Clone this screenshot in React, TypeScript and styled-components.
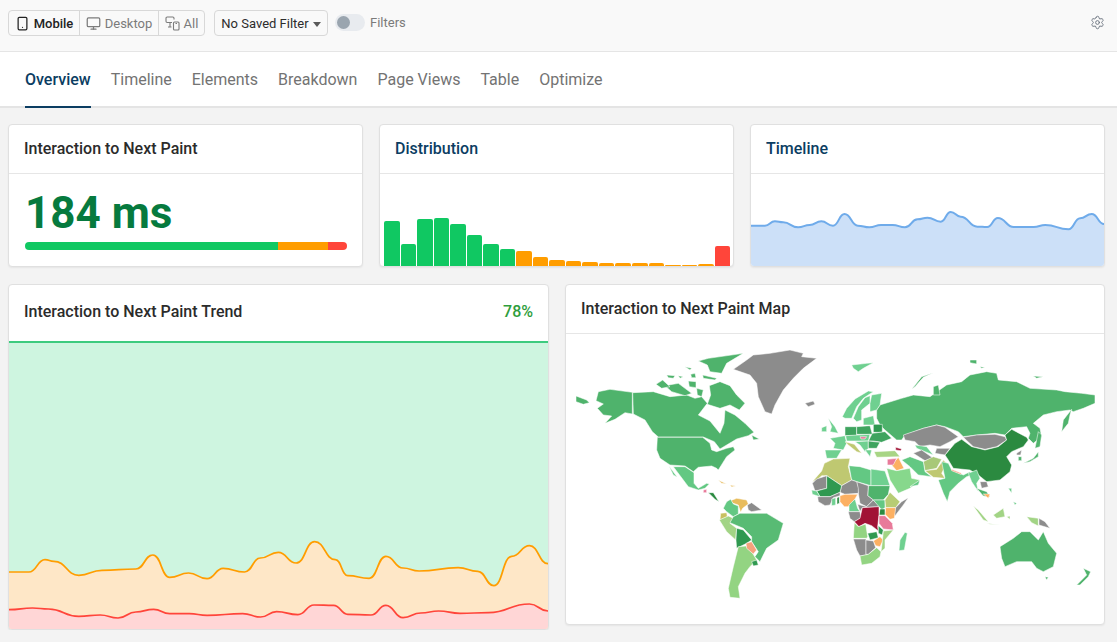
import React from 'react';
import styled, { createGlobalStyle } from 'styled-components';
import { Monitor, Settings, Smartphone } from 'lucide-react';

type Point = [number, number];
type Shape = [string, string];

const GlobalStyle = createGlobalStyle`
  html, body { margin: 0; padding: 0; background: #f3f3f3; overflow: hidden; }
  body { font-family: Roboto, "Liberation Sans", sans-serif; }
`;

const TopBar = styled.div`
  height: 41px;
  display: flex;
  align-items: flex-start;
  padding: 10px 12px 0 8px;
  background: #f9f9f9;
  border-bottom: 1px solid #e5e5e5;
`;

const Segments = styled.div`
  display: flex;
  height: 26px;
  box-sizing: border-box;
  border: 1px solid #d8d8d8;
  border-radius: 4px;
`;

const Segment = styled.div<{ $active?: boolean; $width: number }>`
  width: ${p => p.$width}px;
  box-sizing: border-box;
  display: flex;
  align-items: center;
  justify-content: center;
  gap: 4px;
  font-size: 13px;
  font-weight: ${p => (p.$active ? 500 : 400)};
  color: ${p => (p.$active ? '#222' : '#7b7b7b')};
  border-left: ${p => (p.$active ? 'none' : '1px solid #d8d8d8')};
`;

const SelectBox = styled.div`
  margin-left: 9px;
  width: 114px;
  height: 26px;
  box-sizing: border-box;
  display: flex;
  align-items: center;
  justify-content: center;
  gap: 4px;
  font-size: 13px;
  color: #2c2c2c;
  border: 1px solid #d8d8d8;
  border-radius: 4px;
`;

const Caret = styled.span`
  width: 0;
  height: 0;
  margin-top: 2px;
  border-left: 4px solid transparent;
  border-right: 4px solid transparent;
  border-top: 5px solid #5a5a5a;
`;

const Toggle = styled.div`
  margin: 4px 0 0 7px;
  width: 30px;
  height: 17px;
  padding-left: 2px;
  box-sizing: border-box;
  display: flex;
  align-items: center;
  background: #e8ebef;
  border-radius: 9px;
`;

const Knob = styled.span`
  width: 13px;
  height: 13px;
  border-radius: 50%;
  background: #9aa5af;
`;

const ToggleLabel = styled.span`
  margin-left: 5px;
  line-height: 25px;
  font-size: 13px;
  color: #7b7b7b;
`;

const GearSlot = styled.div`
  margin: 5px 0 0 auto;
  display: flex;
  color: #6c7480;
`;

const TabBar = styled.nav`
  height: 54px;
  display: flex;
  gap: 20px;
  padding-left: 25px;
  background: #fff;
  border-bottom: 2px solid #e4e4e4;
`;

const Tab = styled.div<{ $active?: boolean }>`
  height: 56px;
  box-sizing: border-box;
  display: flex;
  align-items: center;
  font-size: 16px;
  font-weight: ${p => (p.$active ? 500 : 400)};
  color: ${p => (p.$active ? '#0b3d62' : '#737373')};
  border-bottom: 2px solid ${p => (p.$active ? '#0b3d62' : 'transparent')};
`;

const Main = styled.main`
  display: flex;
  flex-direction: column;
  gap: 17px;
  padding: 16px 12px 0 8px;
`;

const TopRow = styled.div`
  display: grid;
  grid-template-columns: repeat(3, 355px);
  column-gap: 16px;
`;

const BottomRow = styled.div`
  display: grid;
  grid-template-columns: 541px 540px;
  column-gap: 16px;
  align-items: start;
`;

const Card = styled.section`
  box-sizing: border-box;
  background: #fff;
  border: 1px solid #e0e0e0;
  border-radius: 4px;
  box-shadow: 0 1px 2px rgba(0, 0, 0, 0.06);
  overflow: hidden;
`;

const CardHeader = styled.header<{ $tall?: boolean; $ruled?: boolean }>`
  height: ${p => (p.$tall ? 56 : 49)}px;
  box-sizing: border-box;
  display: flex;
  align-items: center;
  justify-content: space-between;
  padding: 0 15px ${p => (p.$tall ? 3 : 1)}px;
  border-bottom: ${p => (p.$ruled ? '1px solid #e6e6e6' : 'none')};
`;

const CardTitle = styled.h2<{ $link?: boolean }>`
  margin: 0;
  font-size: 16px;
  font-weight: 500;
  color: ${p => (p.$link ? '#0b3d62' : '#2b2b2b')};
`;

const Percent = styled.span`
  font-size: 16px;
  font-weight: 500;
  color: #2f9e3d;
`;

const MetricBody = styled.div`
  height: 92px;
  box-sizing: border-box;
  padding: 13px 15px 0 16px;
`;

const MetricValue = styled.div`
  font-size: 44px;
  line-height: 52px;
  font-weight: 700;
  color: #067a3e;
`;

const ScoreBar = styled.div`
  display: flex;
  height: 8px;
  margin-top: 3px;
  border-radius: 4px;
  overflow: hidden;
`;

const ScorePart = styled.span<{ $color: string }>`
  background: ${p => p.$color};
`;

const Bars = styled.div`
  height: 92px;
  box-sizing: border-box;
  display: flex;
  align-items: flex-end;
  gap: 1px;
  padding: 0 3px 0 4px;
`;

const Bar = styled.div<{ $color: string }>`
  flex: 1;
  background: ${p => p.$color};
  border-radius: 2px 2px 0 0;
`;

const ChartSvg = styled.svg`
  display: block;
  width: 100%;
`;

const GREEN = '#10c862';
const ORANGE = '#ff9d00';
const RED = '#ff453a';

const tabs = ['Overview', 'Timeline', 'Elements', 'Breakdown', 'Page Views', 'Table', 'Optimize'];

const barHeights: [number, string][] = [
  [45, GREEN], [22, GREEN], [47, GREEN], [48, GREEN], [42, GREEN], [31, GREEN], [22, GREEN], [17, GREEN],
  [15, ORANGE], [9, ORANGE], [6, ORANGE], [5, ORANGE], [4, ORANGE], [3, ORANGE], [3, ORANGE], [3, ORANGE],
  [3, ORANGE], [1, ORANGE], [1, ORANGE], [2, ORANGE], [20, RED],
];

const sparkLine: Point[] = [
  [18, 677], [60, 677], [90, 664], [115, 667], [160, 682], [195, 675], [230, 664], [265, 677], [300, 642],
  [340, 677], [375, 682], [410, 675], [445, 675], [482, 682], [520, 658], [550, 653], [590, 665], [620, 636],
  [650, 650], [700, 680], [730, 681], [762, 654], [810, 681], [870, 681], [905, 675], [975, 688], [1010, 655],
  [1045, 642], [1082, 672],
];

const orangeLine: Point[] = [
  [24, 157], [80, 157], [125, 120], [150, 125], [220, 167], [285, 152], [380, 148], [428, 106], [475, 173],
  [528, 160], [580, 177], [625, 146], [685, 157], [730, 115], [780, 98], [830, 130], [882, 66], [940, 120],
  [975, 168], [1035, 176], [1082, 110], [1130, 145], [1175, 154], [1285, 144], [1340, 155], [1385, 198],
  [1435, 110], [1485, 78], [1537, 132],
];

const redLine: Point[] = [
  [24, 270], [90, 265], [135, 268], [220, 290], [280, 286], [330, 295], [380, 277], [430, 269], [475, 282],
  [530, 282], [580, 287], [680, 282], [730, 292], [775, 276], [835, 285], [880, 256], [935, 257], [975, 284],
  [1040, 286], [1082, 257], [1130, 294], [1180, 280], [1230, 274], [1290, 281], [1370, 279], [1485, 253],
  [1537, 274],
];

// curve through the points, flat at each knot like the chart lib's monotone mode
const smooth = (pts: Point[]) =>
  pts.reduce((d, [x, y], i) => {
    if (i === 0) return `M${x} ${y}`;
    const [px, py] = pts[i - 1];
    const mx = (px + x) / 2;
    return `${d} C${mx} ${py} ${mx} ${y} ${x} ${y}`;
  }, '');

const area = (pts: Point[], bottom: number) =>
  `${smooth(pts)} L${pts[pts.length - 1][0]} ${bottom} L${pts[0][0]} ${bottom}Z`;

const C = {
  mid: '#4fb36c',
  brazil: '#58bb74',
  light: '#63c883',
  pale: '#6fd090',
  lime: '#93d482',
  peru: '#a2d485',
  dark: '#2b8a40',
  deep: '#2f9950',
  europe: '#3fa45f',
  gray: '#8c8c8c',
  olive: '#bfc871',
  khaki: '#c8c060',
  amber: '#e8bc5c',
  orange: '#fcb062',
  salmon: '#f5a27c',
  pink: '#e87a9a',
  crimson: '#a11235',
};

// outlines are traced per crop of the reference, so each group has its own origin
const canadaLand: Shape[] = [
  [C.mid, 'M38 143L100 140L150 155L200 150L225 160L245 155L262 175L235 210L270 228L300 265L312 235L315 195L345 210L375 235L402 262L385 272L350 282L300 312L283 290L250 276H115L97 260L75 225L40 207Z'],
  [C.mid, 'M262 178L272 150L268 122L300 110L330 122L350 150L375 175L358 195L330 180L300 190Z'],
  [C.mid, 'M135 122L175 115L215 145L195 152L155 140Z'],
  [C.mid, 'M108 118L128 105L150 125L125 130Z'],
  [C.mid, 'M235 48L265 40L370 25L320 55L305 85L270 80L262 60Z'],
  [C.mid, 'M205 108L228 110V128L208 125Z'],
  [C.mid, 'M140 90L165 92L160 100L145 98Z'],
  [C.mid, 'M175 92L190 95L180 100Z'],
  [C.mid, 'M195 65L215 70L210 75Z'],
  [C.mid, 'M212 88L225 85L228 98H215Z'],
  [C.mid, 'M248 90L290 100L285 105L250 100Z'],
  [C.mid, 'M230 130L250 135L245 155L232 150Z'],
  [C.mid, 'M395 270L418 282L400 285Z'],
];

const americasLand: Shape[] = [
  [C.mid, 'M85 155L120 148L187 157V222L165 218L135 238L105 250L125 228L100 225L82 205L100 192L78 182Z'],
  [C.mid, 'M18 168L50 180L58 188L40 193L18 185Z'],
  [C.gray, 'M490 88L530 60L550 45L600 40L660 30L700 40L695 50L740 55L700 85L670 115L640 150L615 195L605 222L585 215L565 170L560 130L540 105Z'],
  [C.mid, 'M262 292H398L420 310L425 330L440 335L470 325L490 320L495 330L470 350L445 390L440 385L425 378L385 382L370 395L345 378L300 375L270 355L260 330Z'],
  [C.light, 'M310 380L345 380L372 398L372 430L385 445L410 430L418 432L405 445L385 450L355 440L340 420Z'],
  [C.light, 'M297 378L322 412L310 405Z'],
  [C.pink, 'M400 450L410 448V458H400Z'],
  [C.dark, 'M415 458H430L447 485L435 478Z'],
  [C.amber, 'M445 420L470 432L455 430Z'],
  [C.amber, 'M480 435L497 438L485 441Z'],
  [C.amber, 'M482 482L500 475L530 480L535 492L518 505L512 517L505 495L490 490Z'],
  [C.light, 'M470 485L482 478L490 492L505 498V522L490 530L470 515L460 505Z'],
  [C.gray, 'M532 495L545 488L575 510L545 515L535 510Z'],
  [C.khaki, 'M452 520L470 518L472 530L450 540Z'],
  [C.peru, 'M448 540L475 528L490 535L480 550L500 565L497 600L470 575Z'],
  [C.brazil, 'M490 530L510 520H590L640 550L625 600L590 625L570 665L555 650L565 635L545 605V590L520 565L480 548Z'],
  [C.deep, 'M500 565L520 570L545 600L530 610L500 625L498 600Z'],
  [C.lime, 'M505 620L528 618L548 640L560 660L540 680L525 700L505 740L510 775L480 772L475 745L490 680Z'],
  [C.salmon, 'M528 610L545 605L560 630L550 642L530 625Z'],
  [C.deep, 'M545 665L560 660L565 675L550 678Z'],
];

const asiaLand: Shape[] = [
  [C.mid, 'M140 210L150 195L215 175L250 165L300 170L350 135L395 125L420 105L470 95L500 100L505 120L560 125L600 145L680 150L705 155L755 160L795 165V190L760 205L730 215L720 210L680 215L640 225L610 250L630 265L635 290L610 310L595 295L600 280L590 260L545 265L525 285L495 280L440 285L400 290L385 275L345 260L320 255L280 265L225 285L215 300H200L165 270L150 255L140 235Z'],
  [C.mid, 'M725 208L700 240L695 275L715 250L720 225Z'],
  [C.mid, 'M245 148L275 110L310 98L280 112L255 140Z'],
  [C.mid, 'M310 140L325 135L330 165H310Z'],
  [C.pale, 'M65 75L110 70L130 68L100 85L85 95L70 85Z'],
  [C.mid, 'M420 60H440V72L420 68Z'],
  [C.mid, 'M450 80L465 82L455 85Z'],
  [C.mid, 'M610 108L640 110L620 115Z'],
  [C.gray, 'M220 285L280 265L320 255L345 262L385 290L360 305L330 320L300 315L270 320L255 305L225 300Z'],
  [C.gray, 'M400 292L440 285L495 283L525 290L530 300L500 320L465 328L430 320Z'],
  [C.dark, 'M345 345L375 310L395 298L425 320L465 330L505 320L530 300L525 285L545 268L590 292L595 300L580 320L545 335L530 350L545 375L540 395L510 420L470 425L445 405L420 390L370 385L355 360Z'],
  [C.pale, 'M255 315L290 320L310 345L285 335L260 325Z'],
  [C.gray, 'M250 340L275 330L310 355L285 362Z'],
  [C.gray, 'M320 325H360L345 345L315 340Z'],
  ['#a8c878', 'M280 365L310 350L335 358L320 385L285 392Z'],
  [C.olive, 'M285 392L320 388L340 360L350 370L335 400L345 415L310 412Z'],
  [C.light, 'M215 360L240 350L280 365L285 395L305 410L265 405L240 380Z'],
  [C.orange, 'M185 375L205 352L222 385L200 392Z'],
  [C.pink, 'M172 358L200 355L190 375H172Z'],
  ['#a8d585', 'M132 335L195 332L210 350L140 352Z'],
  [C.crimson, 'M197 322L215 327L212 332L197 330Z'],
  ['#87d88c', 'M170 385L200 392L240 385L245 415L270 420L240 445L205 460L180 420Z'],
  [C.light, 'M240 440L270 420L265 435Z'],
  [C.light, 'M335 365L355 370L365 390L400 405L420 395L425 405L410 410L385 430L360 455L352 485L340 460L325 420L345 415Z'],
  [C.salmon, 'M365 388L395 400L392 403L365 392Z'],
  [C.pale, 'M415 400L440 390L450 415L440 430L445 455L425 425Z'],
  [C.gray, 'M450 425H470L475 440L455 445Z'],
  [C.mid, 'M440 445L470 455L480 470L460 468Z'],
  [C.orange, 'M460 462H480L475 475Z'],
  [C.peru, 'M430 498L445 510L475 545L460 540Z'],
  [C.peru, 'M490 525L520 505L525 530L500 535Z'],
  [C.peru, 'M530 530L540 528V538Z'],
  [C.peru, 'M470 550L510 555L480 553Z'],
  [C.light, 'M535 445H545V460Z'],
  [C.light, 'M550 485L560 490L555 495Z'],
  [C.peru, 'M590 530L625 535V558L605 548Z'],
  [C.gray, 'M627 535L645 545L660 565L627 555Z'],
  [C.mid, 'M625 275L635 285L630 320L615 325Z'],
  [C.mid, 'M580 370L610 355L625 335V350L600 365Z'],
  [C.gray, 'M560 340L575 330L572 345H560Z'],
  [C.mid, 'M565 350H575V362H565Z'],
  [C.mid, 'M510 620L550 595L575 575H600L625 600L640 575L655 610L680 640L670 680L640 695L620 685L605 665H560L525 680L515 655Z'],
  [C.mid, 'M740 735L770 705L760 685L782 695L775 710L750 735Z'],
  [C.mid, 'M645 710L655 712L650 720Z'],
];

const europeLand: Shape[] = [
  [C.gray, 'M0 55L25 48L30 58L10 65Z'],
  [C.pale, 'M112 95L125 70L150 42L190 18L205 20L175 40L155 65L140 100L120 100Z'],
  [C.pale, 'M145 100L160 65L180 38L195 32V55L170 75V105L155 110Z'],
  [C.pale, 'M200 30L230 25L225 60L215 75L195 80V55Z'],
  [C.pale, 'M70 100L90 125L100 145L75 140L80 125Z'],
  [C.pale, 'M50 128L65 122V140H50Z'],
  [C.pale, 'M75 160L120 152L125 175L115 195L85 190L90 175Z'],
  [C.pale, 'M60 195H110L95 220H65Z'],
  [C.europe, 'M120 125H155V152H120Z'],
  [C.europe, 'M155 125L195 122L202 148H155Z'],
  [C.pale, 'M175 100L205 92L210 120H175Z'],
  [C.deep, 'M205 118H232V142H205Z'],
  [C.europe, 'M202 145L240 140L260 160L230 172L205 168H190Z'],
  [C.pale, 'M122 152L195 148L190 168H125Z'],
  [C.pink, 'M165 155H185L180 162H168Z'],
  [C.olive, 'M120 170L148 178L170 205L155 200L130 180Z'],
  [C.pale, 'M150 170L190 168V190L180 200L165 180Z'],
  [C.europe, 'M190 168L225 172L215 190H190Z'],
  [C.pale, 'M180 195H200L195 215Z'],
];

const africaLand: Shape[] = [
  [C.olive, 'M22 80L50 48L58 25L85 12L135 10L130 35L140 75L110 92L65 62H50L40 72Z'],
  [C.light, 'M132 32L165 35L198 45V92L155 80L140 75Z'],
  [C.pale, 'M198 42L240 48L255 92H198Z'],
  [C.mid, 'M190 92H255L250 118L235 135H205L188 122Z'],
  [C.gray, 'M155 80L190 92L188 122L205 135L185 155L165 145L160 115Z'],
  [C.gray, 'M110 92L140 75L155 80L160 100V115L120 118L105 112Z'],
  [C.gray, 'M22 85L35 72L65 62V100L30 108Z'],
  [C.deep, 'M65 62L110 92L105 112L75 125H45L35 108L65 100Z'],
  [C.pale, 'M20 105L35 108L45 125L22 118Z'],
  [C.gray, 'M38 125H75L105 112V122L85 128L75 150L60 152L40 140Z'],
  [C.pale, 'M80 132L92 128V150L80 152Z'],
  [C.dark, 'M96 128L103 125V145L96 148Z'],
  [C.orange, 'M105 122L120 118H158L150 132L130 155H118L105 140Z'],
  [C.pale, 'M132 150L150 132L158 160L165 170L132 170Z'],
  [C.gray, 'M130 170H165L168 188L148 200L135 190Z'],
  [C.gray, 'M158 148L185 155L205 135L225 155L172 158L165 170Z'],
  [C.light, 'M205 135H240V158L230 165L222 155Z'],
  ['#b7cc74', 'M240 135L255 112L285 140L272 158H242Z'],
  [C.gray, 'M270 160L290 140L310 128L295 150L268 185Z'],
  [C.orange, 'M242 158H272L268 190L255 193L240 178Z'],
  [C.dark, 'M225 162H240V180H222Z'],
  [C.crimson, 'M172 158L222 155V180L218 215L220 228L200 212L180 205L162 215L148 200L165 190Z'],
  [C.pink, 'M222 182H240L262 205L265 225L235 222L222 205Z'],
  [C.lime, 'M148 203L160 215L182 207L188 245L185 250H145Z'],
  [C.deep, 'M188 235L215 230L220 248L195 255Z'],
  [C.deep, 'M220 212L235 225L232 240L220 235Z'],
  [C.orange, 'M205 258L225 245L235 255L225 275L212 272Z'],
  [C.peru, 'M235 228L265 225L240 255V280L228 290L232 260Z'],
  [C.gray, 'M145 252L183 252V300L165 303L155 285Z'],
  [C.gray, 'M183 255L205 258L212 278L190 298H183Z'],
  [C.lime, 'M165 303L190 298L215 278L228 290L225 305L200 325L170 330Z'],
  [C.pale, 'M300 232L307 235L298 285L282 287L285 255Z'],
];

const mapGroups: { x: number; y: number; items: Shape[] }[] = [
  { x: 620, y: 345, items: canadaLand },
  { x: 570, y: 340, items: americasLand },
  { x: 830, y: 340, items: asiaLand },
  { x: 805, y: 385, items: europeLand },
  { x: 805, y: 455, items: africaLand },
];

const DevicesIcon = () => (
  <svg width="15" height="15" viewBox="0 0 15 15" fill="none" stroke="currentColor" strokeWidth="1.1">
    <path d="M7 6.5H2.2A1.2 1.2 0 0 1 1 5.3V2.2A1.2 1.2 0 0 1 2.2 1H7.8A1.2 1.2 0 0 1 9 2.2V3.5" />
    <path d="M5 6.5V11M3 11H6.5" />
    <rect x="8.5" y="6" width="5.5" height="8" rx="1" />
    <path d="M10.5 7.5H12" />
  </svg>
);

const App = () => (
  <>
    <GlobalStyle />
    <TopBar>
      <Segments>
        <Segment $active $width={70}><Smartphone size={15} />Mobile</Segment>
        <Segment $width={79}><Monitor size={15} />Desktop</Segment>
        <Segment $width={46}><DevicesIcon />All</Segment>
      </Segments>
      <SelectBox>No Saved Filter<Caret /></SelectBox>
      <Toggle><Knob /></Toggle>
      <ToggleLabel>Filters</ToggleLabel>
      <GearSlot><Settings size={15} strokeWidth={1.5} /></GearSlot>
    </TopBar>
    <TabBar>
      {tabs.map((tab, i) => <Tab key={tab} $active={i === 0}>{tab}</Tab>)}
    </TabBar>
    <Main>
      <TopRow>
        <Card>
          <CardHeader $ruled><CardTitle>Interaction to Next Paint</CardTitle></CardHeader>
          <MetricBody>
            <MetricValue>184 ms</MetricValue>
            <ScoreBar>
              <ScorePart $color={GREEN} style={{ width: '78.6%' }} />
              <ScorePart $color={ORANGE} style={{ width: '15.5%' }} />
              <ScorePart $color={RED} style={{ width: '5.9%' }} />
            </ScoreBar>
          </MetricBody>
        </Card>
        <Card>
          <CardHeader $ruled><CardTitle $link>Distribution</CardTitle></CardHeader>
          <Bars>
            {barHeights.map(([height, color], i) => <Bar key={i} $color={color} style={{ height }} />)}
          </Bars>
        </Card>
        <Card>
          <CardHeader $ruled><CardTitle $link>Timeline</CardTitle></CardHeader>
          <ChartSvg viewBox="18 522 1064 276" height={92} preserveAspectRatio="none">
            <path d={area(sparkLine, 800)} fill="#cce0f8" />
            <path d={smooth(sparkLine)} fill="none" stroke="#6fabea" strokeWidth={6} />
          </ChartSvg>
        </Card>
      </TopRow>
      <BottomRow>
        <Card>
          <CardHeader $tall>
            <CardTitle>Interaction to Next Paint Trend</CardTitle>
            <Percent>78%</Percent>
          </CardHeader>
          <ChartSvg viewBox="24 -536 1513 864" height={288} preserveAspectRatio="none">
            <rect x={24} y={-536} width={1513} height={864} fill="#cef5e0" />
            <rect x={24} y={-536} width={1513} height={6} fill="#3dcb7f" />
            <path d={area(orangeLine, 328)} fill="#fee7c7" />
            <path d={smooth(orangeLine)} fill="none" stroke={ORANGE} strokeWidth={5} />
            <path d={area(redLine, 328)} fill="#ffd6d6" />
            <path d={smooth(redLine)} fill="none" stroke={RED} strokeWidth={5} />
          </ChartSvg>
        </Card>
        <Card>
          <CardHeader $ruled><CardTitle>Interaction to Next Paint Map</CardTitle></CardHeader>
          <ChartSvg viewBox="566 334 538 290" height={290}>
            {mapGroups.map(({ x, y, items }) => (
              <g key={x + y} transform={`translate(${x} ${y}) scale(0.3333)`}>
                {items.map(([fill, d]) => (
                  <path key={d} d={d} fill={fill} stroke="#fff" strokeWidth={1.6} strokeLinejoin="round" />
                ))}
              </g>
            ))}
          </ChartSvg>
        </Card>
      </BottomRow>
    </Main>
  </>
);

export default App;
